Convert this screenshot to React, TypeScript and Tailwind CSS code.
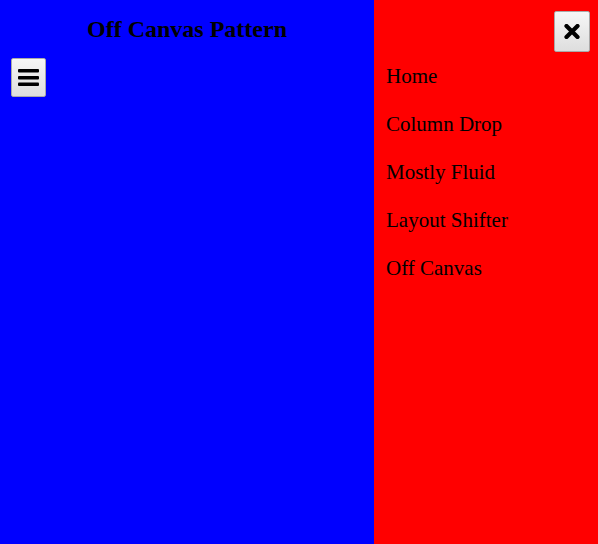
import { useState } from "react";

const links = ["Home", "Column Drop", "Mostly Fluid", "Layout Shifter", "Off Canvas"];

const btn =
  "flex items-center justify-center border border-[#a9a9a9] bg-gradient-to-b from-[#f6f6f6] to-[#dedede] rounded-[2px]";

export default function App() {
  const [open, setOpen] = useState(true);

  return (
    <div className="flex h-[544px] w-[598px] overflow-hidden font-['Liberation_Serif',serif] text-black">
      <main className="flex w-[374px] flex-col bg-[#0000ff]">
        <h1 className="pt-[15px] text-center text-[24px] font-bold leading-[28px]">Off Canvas Pattern</h1>
        <button
          onClick={() => setOpen(!open)}
          className={`${btn} ml-[11px] mt-[15px] h-[39px] w-[35px]`}
          aria-label="Open menu"
        >
          <svg width="21" height="17" viewBox="0 0 21 17">
            <rect x="0" y="0" width="21" height="3.4" rx="1" fill="#000" />
            <rect x="0" y="7" width="21" height="3.4" rx="1" fill="#000" />
            <rect x="0" y="13.6" width="21" height="3.4" rx="1" fill="#000" />
          </svg>
        </button>
      </main>
      {open && (
        <nav className="flex flex-1 flex-col bg-[#ff0000]">
          <div className="flex justify-end pr-[8px] pt-[11px]">
            <button onClick={() => setOpen(false)} className={`${btn} h-[41px] w-[36px]`} aria-label="Close menu">
              <svg width="16" height="15" viewBox="0 0 16 15">
                <path d="M2.5 2 L13.5 13 M13.5 2 L2.5 13" stroke="#000" strokeWidth="4.2" strokeLinecap="round" />
              </svg>
            </button>
          </div>
          <ul>
            {links.map((l) => (
              <li key={l} className="pl-[12px] text-[21px] leading-[48px]">
                <a href="#">{l}</a>
              </li>
            ))}
          </ul>
        </nav>
      )}
    </div>
  );
}
